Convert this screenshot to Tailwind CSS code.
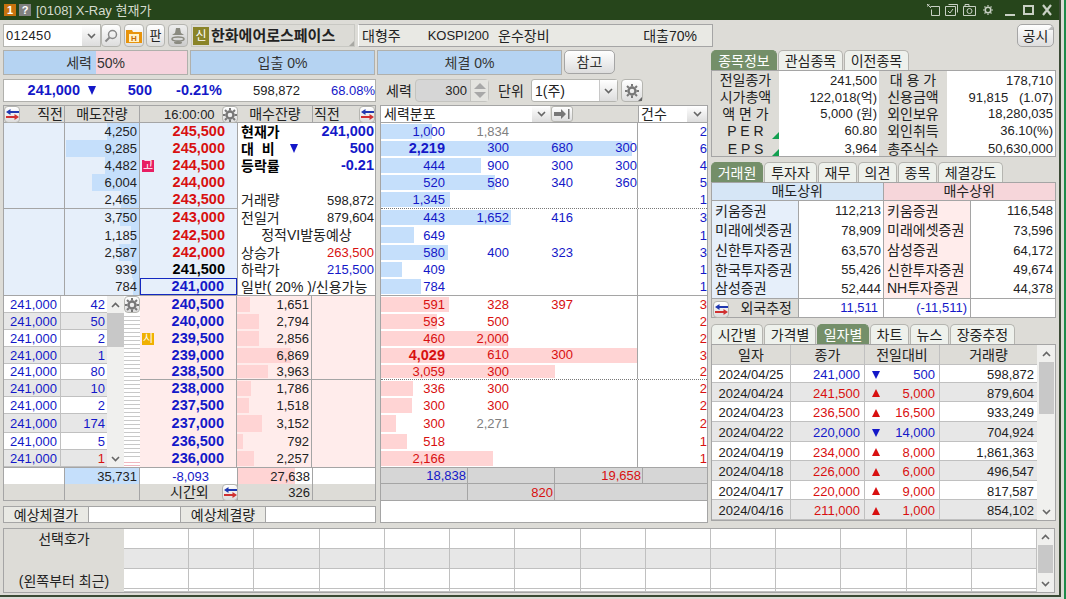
<!DOCTYPE html>
<html lang="ko">
<head>
  <meta charset="UTF-8" />
  <title>[0108] X-Ray 현재가</title>
  <script src="https://cdn.jsdelivr.net/npm/@tailwindcss/browser@4"></script>
</head>
<body class="bg-[#dddcd7]">
<div class="relative w-[1066px] h-[599px] overflow-hidden bg-[#dddcd7] text-[#222] text-[13px] leading-none font-['Liberation_Sans','Noto_Sans_CJK_KR',sans-serif]">
  <div class="w-[1061px] h-[597px] flex flex-col border-r-2 border-b-2 border-[#3a4a34]">

    <!-- title bar -->
    <div class="h-[20px] shrink-0 bg-[#26451b] flex items-center pl-[4px] pr-[7px] text-[#d5dccf]">
      <span class="w-[12px] h-[12px] bg-[#c8730f] text-white text-[11px] font-bold flex items-center justify-center">1</span>
      <span class="w-[12px] h-[12px] ml-[3px] bg-[#808080] text-white text-[11px] font-bold flex items-center justify-center">?</span>
      <span class="ml-[5px] text-[13px]">[0108] X-Ray 현재가</span>
      <div class="ml-auto flex items-center">
        <svg width="13" height="12" viewBox="0 0 13 12" fill="none" stroke="#c8d0c4"><path d="M3.500 2.500h9v9h-8v-6M0 0l4 4M0 3V0h3"/></svg>
        <svg class="ml-[5px]" width="13" height="12" viewBox="0 0 13 12" fill="none" stroke="#c8d0c4"><path d="M3.500 0.500h9v8M0.500 2.500h10v9h-10zM3 7l2 2 3-4"/></svg>
        <svg class="ml-[5px]" width="13" height="12" viewBox="0 0 13 12" fill="none" stroke="#c8d0c4"><path d="M0.500 2.500h12v9h-12zM2 2V0.500h4V2"/><circle cx="6.500" cy="7" r="2.500"/></svg>
        <svg class="ml-[7px]" width="10" height="12" viewBox="0 0 10 12" fill="none" stroke="#c8d0c4" stroke-width="1.600"><circle cx="5" cy="6" r="2.800"/><path stroke-width="1.200" d="M5 1v1.500M5 9.500V11M0 6h1.500M8.500 6H10M1.500 2.500l1 1M7.500 8.500l1 1M8.500 2.500l-1 1M2.500 8.500l-1 1"/></svg>
        <svg class="ml-[12px]" width="10" height="14" viewBox="0 0 10 14" fill="#c8d0c4"><rect x="0" y="11" width="10" height="2"/></svg>
        <svg class="ml-[8px]" width="11" height="14" viewBox="0 0 11 14" fill="none" stroke="#c8d0c4" stroke-width="2"><rect x="1" y="3" width="9" height="8"/></svg>
        <svg class="ml-[8px]" width="10" height="14" viewBox="0 0 10 14" fill="none" stroke="#c8d0c4" stroke-width="2.200"><path d="M1 2l8 10M9 2L1 12"/></svg>
      </div>
    </div>

    <!-- code row -->
    <div class="h-[23px] mt-[4px] ml-[3px] shrink-0 flex">
      <div class="w-[98px] flex border border-[#b5b5b0] bg-white">
        <span class="flex-1 flex items-center pl-[2px] text-[13px] tracking-[0.3px]">012450</span>
        <span class="w-[18px] flex items-center justify-center bg-[linear-gradient(#fff,#ddd)]" data-icon="chev"></span>
      </div>
      <button class="w-[20px] ml-0 border border-[#b5b5b0] rounded-[4px] bg-[linear-gradient(#fff,#ddd)] flex items-center justify-center">
        <svg width="14" height="14" viewBox="0 0 14 14" fill="none" stroke="#888" stroke-width="1.500"><circle cx="8.500" cy="5.500" r="4"/><path stroke-width="2" d="M5.500 8.500L1.500 12.500"/></svg>
      </button>
      <button class="w-[20px] ml-[3px] border border-[#b5b5b0] rounded-[4px] bg-[linear-gradient(#fff,#ddd)] flex items-center justify-center">
        <svg width="16" height="16" viewBox="0 0 16 16"><path fill="#e8940c" d="M0 2h6l1 2h9v11H0z"/><rect x="3" y="6" width="10" height="8" fill="#fff2c8"/><text x="5" y="13" font-size="8" font-weight="700" fill="#c86a00">H</text></svg>
      </button>
      <button class="w-[19px] ml-[2px] border border-[#b5b5b0] rounded-[4px] bg-[linear-gradient(#fff,#ddd)] text-[13px] flex items-center justify-center">판</button>
      <button class="w-[20px] ml-[3px] border border-[#b5b5b0] rounded-[4px] bg-[linear-gradient(#eee,#ccc)] flex items-center justify-center">
        <svg width="16" height="18" viewBox="0 0 16 18"><path fill="#8a8a80" d="M6 1h4l1 5 3 2H2l3-2z"/><ellipse cx="8" cy="12" rx="6" ry="2" fill="none" stroke="#8a8a80" stroke-width="1.500"/><ellipse cx="8" cy="15.500" rx="4" ry="1.500" fill="#8a8a80"/></svg>
      </button>
      <div class="relative w-[164px] ml-[3px] border border-[#c8c8c3] bg-[#dcdbd6] flex items-center pl-[1px]">
        <span class="w-[16px] h-[18px] bg-[#8a8428] text-white text-[12px] flex items-center justify-center">신</span>
        <span class="ml-[2px] text-[15px] font-bold">한화에어로스페이스</span>
        <span class="absolute right-0 bottom-0 border-l-[5px] border-b-[5px] border-l-transparent border-b-[#a8a8a3]"></span>
      </div>
      <div class="w-[355px] ml-[3px] border border-[#a5a5a5] bg-[#e9e9e4] border-l-white flex items-center pl-[3px] text-[14px]">
        <span>대형주</span>
        <span class="ml-[27px] text-[13px]">KOSPI200</span>
        <span class="ml-[9px]">운수장비</span>
        <span class="ml-auto mr-[15px]">대출70%</span>
      </div>
      <button class="relative w-[37px] ml-auto mr-[5px] border border-[#a5a5a5] rounded-[5px] bg-[linear-gradient(#fff,#ddd)] text-[14px]">공시<span class="absolute right-0 top-0 border-l-[5px] border-b-[5px] border-l-transparent border-b-[#bbb]"></span></button>
    </div>

    <div class="flex mt-[3px] ml-[3px]">
      <!-- left block -->
      <div class="w-[705px] shrink-0">
        <div class="h-[25px] flex text-[14px] text-[#333]">
          <div class="w-[185px] flex border border-[#b0b0ac]">
            <span class="w-[92px] bg-[#b5d3f2] flex items-center justify-end pr-[4px]">세력</span>
            <span class="flex-1 bg-[#f6d3dd] flex items-center pl-[1px]">50%</span>
          </div>
          <div class="w-[185px] ml-[2px] border border-[#b0b0ac] bg-[#b5d3f2] flex items-center justify-center">입출 0%</div>
          <div class="w-[185px] ml-[2px] border border-[#b0b0ac] bg-[#b5d3f2] flex items-center justify-center">체결 0%</div>
          <button class="w-[51px] h-[24px] ml-[2px] border border-[#a5a5a5] rounded-[5px] bg-[linear-gradient(#fff,#ddd)]">참고</button>
        </div>

        <div class="h-[23px] mt-[4px] flex">
          <div class="w-[373px] border border-[#b0b0ac] bg-white relative flex items-center">
            <span class="w-[76px] text-right font-bold text-[14.500px] text-[#1418c8]">241,000</span>
            <span class="ml-[8px] border-x-[4px] border-t-[9px] border-x-transparent border-t-[#1418c8]"></span>
            <span class="w-[56px] text-right font-bold text-[14.500px] text-[#1418c8]">500</span>
            <span class="w-[70px] text-right font-bold text-[14.500px] text-[#1418c8]">-0.21%</span>
            <span class="w-[78px] text-right">598,872</span>
            <span class="flex-1 text-right text-[#1418c8]">68.08%</span>
          </div>
          <span class="ml-[10px] w-[28px] self-center text-[14px]">세력</span>
          <div class="ml-[1px] w-[74px] flex border border-[#c4c4c0] rounded-[4px] bg-[#d6d6d6]">
            <span class="flex-1 flex items-center justify-end pr-[3px]">300</span>
            <span class="w-[18px] border-l border-[#c4c4c0] flex flex-col items-center justify-center gap-[3px] bg-[#e4e4e0]">
              <span class="border-x-[6px] border-b-[6px] border-x-transparent border-b-[#a8a8a8]"></span>
              <span class="border-x-[6px] border-t-[6px] border-x-transparent border-t-[#a8a8a8]"></span>
            </span>
          </div>
          <span class="ml-[9px] w-[33px] self-center text-[14px]">단위</span>
          <div class="w-[87px] flex border border-[#b5b5b0] rounded-[3px] bg-white">
            <span class="flex-1 flex items-center pl-[3px] text-[14px]">1(주)</span>
            <span class="w-[18px] flex items-center justify-center border-l border-[#c8c8c8] bg-[linear-gradient(#fff,#ddd)]" data-icon="chev"></span>
          </div>
          <button class="relative w-[22px] ml-[3px] border border-[#b5b5b0] rounded-[4px] bg-[linear-gradient(#fff,#ddd)] flex items-center justify-center">
            <span data-icon="gear"></span>
            <span class="absolute right-0 bottom-0 border-l-[4px] border-b-[4px] border-l-transparent border-b-[#666]"></span>
          </button>
        </div>

        <div class="flex mt-[3px]">
          <div class="w-[373px] shrink-0">
            <!-- order book -->
            <div class="border border-[#a5a5a5] bg-white">
              <div class="h-[17px] grid grid-cols-[61px_75px_98px_75px_1fr] bg-[#dddcd7] border-b border-[#a5a5a5] text-[14px]">
                <div class="relative flex items-center justify-end pr-[1px] border-r border-[#a5a5a5]">직전<span class="absolute left-0 top-0" data-icon="swap"></span></div>
                <div class="flex items-center justify-center border-r border-[#a5a5a5]">매도잔량</div>
                <div class="relative flex items-center pl-[24px] text-[13px]">16:00:00<span class="absolute right-0 top-0" data-icon="gearbtn"></span></div>
                <div class="flex items-center justify-center border-r border-[#a5a5a5]">매수잔량</div>
                <div class="relative flex items-center pl-[1px]">직전<span class="absolute right-0 top-0" data-icon="swap"></span></div>
              </div>
              <div class="flex border-b border-[#a5a5a5]">
                <div id="ask" class="w-[234px] bg-[#e6effa] border-r border-[#a5a5a5]"></div>
                <div id="info" class="flex-1"></div>
              </div>
              <div class="flex">
                <div id="bidleft" class="w-[103px] shrink-0"></div>
                <div class="w-[17px] shrink-0 bg-[#f0f0ee] flex flex-col items-center">
                  <span class="h-[17px] flex items-center" data-icon="up"></span>
                  <span class="w-full h-[34px] bg-[#c8c8c8]"></span>
                  <span class="mt-auto h-[17px] flex items-center" data-icon="chev"></span>
                </div>
                <div class="w-[16px] shrink-0 flex flex-col">
                  <span class="h-[17px]" data-icon="gearbtn"></span>
                  <span class="flex-1 bg-[repeating-linear-gradient(#fff_0,#fff_3px,#c8c8c8_3px,#c8c8c8_4px)]"></span>
                  <span class="h-[7px] bg-[repeating-linear-gradient(#fff_0,#fff_2px,#f0b8c0_2px,#f0b8c0_3px)]"></span>
                </div>
                <div id="bid" class="flex-1 bg-[#ffeceb]"></div>
              </div>
              <div class="h-[17px] grid grid-cols-[61px_75px_98px_75px_1fr] border-t border-[#a5a5a5] bg-white">
                <div class="border-r border-[#a5a5a5]"></div>
                <div class="bg-[#c5dffb] flex items-center justify-end pr-[2px] border-r border-[#a5a5a5]">35,731</div>
                <div class="flex items-center justify-end pr-[28px] text-[#1418c8] border-r border-[#a5a5a5]">-8,093</div>
                <div class="relative flex items-center justify-end pr-[2px] border-r border-[#a5a5a5]"><span class="absolute left-0 inset-y-0 w-[57px] bg-[#ffd4d4]"></span><span class="relative">27,638</span></div>
                <div></div>
              </div>
              <div class="h-[16px] grid grid-cols-[61px_75px_98px_75px_1fr] bg-[#dddcd7]">
                <div class="border-r border-[#a5a5a5]"></div>
                <div class="border-r border-[#a5a5a5]"></div>
                <div class="relative flex items-center pl-[30px] text-[14px] border-r border-[#a5a5a5]">시간외<span class="absolute right-[-1px] top-0" data-icon="swap"></span></div>
                <div class="flex items-center justify-end pr-[2px] border-r border-[#a5a5a5]">326</div>
                <div></div>
              </div>
            </div>
            <div class="h-[17px] mt-[5px] flex border border-[#a5a5a5] bg-white text-[14px]">
              <div class="w-[85px] bg-[#e9e9e4] border-r border-[#a5a5a5] flex items-center justify-center">예상체결가</div>
              <div class="w-[91px]"></div>
              <div class="w-[86px] bg-[#e9e9e4] border-x border-[#a5a5a5] flex items-center justify-center">예상체결량</div>
            </div>
          </div>

          <!-- power distribution -->
          <div class="w-[329px] ml-[4px] h-[418px] border border-[#a5a5a5] bg-white flex flex-col">
            <div class="h-[17px] shrink-0 flex bg-[#dddcd7] border-b border-[#a5a5a5] text-[14px]">
              <span class="w-[151px] bg-white flex items-center pl-[3px]">세력분포</span>
              <span class="w-[18px] flex items-center justify-center bg-[linear-gradient(#fff,#ddd)]" data-icon="chev"></span>
              <button class="w-[22px] ml-[1px] border border-[#b5b5b0] rounded-[3px] bg-[linear-gradient(#fff,#ddd)] flex items-center justify-center">
                <svg width="16" height="10" viewBox="0 0 16 10" fill="#777"><path d="M0 3h7V0l5 5-5 5V7H0z"/><rect x="14" y="0" width="1.500" height="10"/></svg>
              </button>
              <span class="w-[65px]"></span>
              <span class="w-[49px] bg-white border-l border-[#a5a5a5] flex items-center pl-[2px]">건수</span>
              <span class="flex-1 flex items-center justify-center bg-[linear-gradient(#fff,#ddd)]" data-icon="chev"></span>
            </div>
            <div id="power"></div>
            <div class="h-[17px] shrink-0 grid grid-cols-[87px_87px_88px_1fr] bg-[#d6d6d6] border-y border-[#a5a5a5]">
              <div class="flex items-center justify-end pr-[1px] text-[#1418c8] border-r border-[#a5a5a5]">18,838</div>
              <div class="border-r border-[#a5a5a5]"></div>
              <div class="flex items-center justify-end pr-[1px] text-[#d81010] border-r border-[#a5a5a5]">19,658</div>
              <div></div>
            </div>
            <div class="h-[17px] shrink-0 grid grid-cols-[87px_87px_1fr] bg-[#d6d6d6] border-b border-[#a5a5a5]">
              <div class="border-r border-[#a5a5a5]"></div>
              <div class="flex items-center justify-end pr-[1px] text-[#d81010] border-r border-[#a5a5a5]">820</div>
              <div></div>
            </div>
          </div>
        </div>
      </div>

      <!-- right block -->
      <div class="w-[345px] ml-[3px] shrink-0">
        <div id="tabs1" class="h-[20px] flex"></div>
        <div id="stock" class="h-[87px] border border-[#a5a5a5] bg-white"></div>
        <div id="tabs2" class="h-[20px] mt-[5px] flex"></div>
        <div class="h-[136px] border border-[#a5a5a5] bg-white flex flex-col">
          <div class="h-[18px] grid grid-cols-2 text-[14px] border-b border-[#a5a5a5]">
            <span class="bg-[#d6e6f6] border-r border-[#a5a5a5] flex items-center justify-center">매도상위</span>
            <span class="bg-[#f6d6da] flex items-center justify-center">매수상위</span>
          </div>
          <div id="brokers" class="flex-1"></div>
          <div class="h-[20px] grid grid-cols-[87px_85px_87px_1fr] border-t border-[#a5a5a5]">
            <div class="relative bg-[#dddcd7] border-r border-[#a5a5a5] flex items-center justify-end pr-[6px] text-[14px]"><span class="absolute left-[1px] top-[2px]" data-icon="swap"></span>외국추정</div>
            <div class="flex items-center justify-end pr-[5px] border-r border-[#a5a5a5] text-[#1418c8]">11,511</div>
            <div class="flex items-center justify-end pr-[3px] border-r border-[#a5a5a5] text-[#1418c8]">(-11,511)</div>
            <div></div>
          </div>
        </div>
        <div id="tabs3" class="h-[20px] mt-[6px] flex"></div>
        <div class="h-[177px] border border-[#a5a5a5] bg-white flex">
          <div class="w-[325px] flex flex-col">
            <div class="h-[20px] grid grid-cols-[79px_74px_75px_1fr] bg-[#dddcd7] border-b border-[#c0c0c0] text-[14px]">
              <span class="flex items-center justify-center border-r border-[#c0c0c0]">일자</span>
              <span class="flex items-center justify-center border-r border-[#c0c0c0]">종가</span>
              <span class="flex items-center justify-center border-r border-[#c0c0c0]">전일대비</span>
              <span class="flex items-center justify-center">거래량</span>
            </div>
            <div id="daily"></div>
          </div>
          <div class="flex-1 bg-[#f0f0ee] flex flex-col items-center">
            <span class="h-[17px] flex items-center" data-icon="up"></span>
            <span class="w-[15px] h-[52px] bg-[#c8c8c8]"></span>
            <span class="mt-auto h-[17px] flex items-center" data-icon="chev"></span>
          </div>
        </div>
      </div>
    </div>

    <!-- selected quotes -->
    <div class="h-[65px] mt-[5px] mx-[3px] w-[1052px] border border-[#a5a5a5] flex bg-white">
      <div class="w-[120px] bg-[#dddcd7] flex flex-col justify-between items-center pt-[3px] pb-[4px] text-[14px]">
        <span>선택호가</span><span>(왼쪽부터 최근)</span>
      </div>
      <div id="picks" class="w-[913px] grid grid-cols-[repeat(14,1fr)] grid-rows-[20px_20px_20px_3px]"></div>
      <div class="flex-1 bg-[#f0f0ee] flex flex-col items-center">
        <span class="h-[16px] flex items-center" data-icon="up"></span>
        <span class="w-[15px] h-[28px] bg-[#c8c8c8]"></span>
        <span class="mt-auto h-[16px] flex items-center" data-icon="chev"></span>
      </div>
    </div>
  </div>
  <div class="absolute right-0 top-0 bottom-0 w-[2px] bg-[#1e8a4a]"></div>
</div>

<script>
  const BLUE = 'text-[#1418c8]', RED = 'text-[#d81010]';
  const icons = {
    chev: '<svg width="9" height="6" viewBox="0 0 9 6" fill="none" stroke="#666" stroke-width="1.600"><path d="M1 1l3.500 3.500L8 1"/></svg>',
    up: '<svg width="9" height="6" viewBox="0 0 9 6" fill="none" stroke="#666" stroke-width="1.600"><path d="M1 5l3.500-3.500L8 5"/></svg>',
    gear: '<svg width="14" height="14" viewBox="0 0 14 14" fill="none" stroke="#777"><circle cx="7" cy="7" r="3.500" stroke-width="2.400"/><path stroke-width="2" d="M7 0v2.500M7 11.500V14M0 7h2.500M11.500 7H14M2 2l1.800 1.800M10.200 10.200L12 12M12 2l-1.800 1.800M3.800 10.200L2 12"/></svg>',
    swap: '<svg width="13" height="11" viewBox="0 0 13 11"><path fill="#2038b0" d="M0 3L4.500 0v2H13v2H4.500v2z"/><path fill="#d03030" d="M13 8L8.500 5v2H0v2h8.500v2z"/></svg>'
  };
  const btn = 'w-[16px] h-[17px] border border-[#b5b5b0] rounded-[4px] bg-[linear-gradient(#fff,#ddd)] flex items-center justify-center';
  document.querySelectorAll('[data-icon]').forEach(el => {
    const name = el.dataset.icon;
    if (name === 'swap') {
      el.className += ' ' + btn;
      el.innerHTML = icons.swap;
    } else if (name === 'gearbtn') {
      el.className += ' ' + btn;
      el.innerHTML = icons.gear;
    } else {
      el.innerHTML = icons[name];
    }
  });

  const askH = [17, 17, 17, 17, 18, 17, 18, 17, 17, 17];
  const bidH = [17, 17, 17, 17, 16, 17, 17, 19, 17, 17];

  // ask side
  const asks = [
    ['4,250', 32, '245,500', RED], ['9,285', 73, '245,000', RED], ['4,482', 34, '244,500', RED, 'hi'],
    ['6,004', 47, '244,000', RED], ['2,465', 18, '243,500', RED], ['3,750', 19, '243,000', RED],
    ['1,185', 8, '242,500', RED], ['2,587', 20, '242,000', RED], ['939', 7, '241,500', 'text-black'], ['784', 6, '241,000', BLUE, 'cur']
  ];
  document.getElementById('ask').innerHTML = asks.map((a, i) => `
    <div class="grid grid-cols-[61px_75px_1fr] ${i === 4 ? 'border-b border-[#a5a5a5]' : ''}" style="height:${askH[i]}px">
      <div class="border-r border-[#a5a5a5]"></div>
      <div class="relative flex items-center justify-end pr-[2px] border-r border-[#a5a5a5]">
        <span class="absolute right-0 inset-y-0 bg-[#c5dffb]" style="width:${a[1]}px"></span><span class="relative">${a[0]}</span>
      </div>
      <div class="flex items-center pl-[2px] pr-[12px] ${a[4] === 'cur' ? 'border border-[#1428c0]' : ''}">
        ${a[4] === 'hi' ? '<span class="w-[12px] h-[12px] bg-[#e81e62] text-white text-[11px] flex items-center justify-center">고</span>' : ''}
        <span class="ml-auto font-bold text-[14.500px] ${a[3]}">${a[2]}</span>
      </div>
    </div>`).join('');

  const info = [
    ['현재가', '241,000', 'font-bold text-black', 'font-bold text-[14.500px] ' + BLUE],
    ['대&nbsp;&nbsp;비', '500', 'font-bold text-black', 'font-bold text-[14.500px] ' + BLUE, true],
    ['등락률', '-0.21', 'font-bold text-black', 'font-bold text-[14.500px] ' + BLUE],
    ['', ''],
    ['거래량', '598,872'], ['전일거', '879,604'], null,
    ['상승가', '263,500', '', RED], ['하락가', '215,500', '', BLUE], 'last'
  ];
  document.getElementById('info').innerHTML = info.map((r, i) => {
    const h = askH[i];
    if (r === null) return `<div class="flex items-center justify-center text-[14px]" style="height:${h}px">정적VI발동예상</div>`;
    if (r === 'last') return `<div class="flex items-center pl-[3px] text-[14px]" style="height:${h}px">일반( 20% )/신용가능</div>`;
    return `<div class="flex items-center pl-[3px] pr-[1px]" style="height:${h}px">
      <span class="text-[14px] ${r[2] || ''}">${r[0]}</span>
      ${r[4] ? '<span class="ml-[15px] border-x-[4px] border-t-[9px] border-x-transparent border-t-[#1418c8]"></span>' : ''}
      <span class="ml-auto ${r[3] || ''}">${r[1]}</span>
    </div>`;
  }).join('');

  // bid side
  const bidPrev = ['42', '50', '2', '1', '80', '10', '2', '174', '5', '1'];
  document.getElementById('bidleft').innerHTML = bidPrev.map((n, i) => `
    <div class="grid grid-cols-[57px_1fr] border-b border-[#c0c0c0] ${i % 2 ? 'bg-[#e7e7e7]' : 'bg-white'}" style="height:${bidH[i]}px">
      <span class="flex items-center justify-end pr-[3px] border-r border-[#c0c0c0] ${BLUE}">241,000</span>
      <span class="flex items-center justify-end pr-[2px] ${i === 9 ? RED : BLUE}">${n}</span>
    </div>`).join('');

  const bids = [
    ['240,500', '1,651', 13], ['240,000', '2,794', 22], ['239,500', '2,856', 22, 'si'], ['239,000', '6,869', 54], ['238,500', '3,963', 31],
    ['238,000', '1,786', 14], ['237,500', '1,518', 12], ['237,000', '3,152', 25], ['236,500', '792', 6], ['236,000', '2,257', 17]
  ];
  document.getElementById('bid').innerHTML = bids.map((b, i) => `
    <div class="grid grid-cols-[97px_75px_1fr] ${i === 4 ? 'border-b border-[#a5a5a5]' : ''}" style="height:${bidH[i]}px">
      <div class="flex items-center pl-[2px] pr-[12px] border-r border-[#a5a5a5]">
        ${b[3] ? '<span class="w-[12px] h-[12px] bg-[#f0b000] text-white text-[11px] flex items-center justify-center">시</span>' : ''}
        <span class="ml-auto font-bold text-[14.500px] ${BLUE}">${b[0]}</span>
      </div>
      <div class="relative flex items-center justify-end pr-[2px] border-r border-[#a5a5a5]">
        <span class="absolute left-0 inset-y-[1px] bg-[#ffd4d4]" style="width:${b[2]}px"></span><span class="relative">${b[1]}</span>
      </div>
      <div></div>
    </div>`).join('');

  // power distribution: bar, four order sizes, count
  const power = [
    [51, ['1,000', '1,834', '', ''], '2'], [251, ['2,219', '300', '680', '300'], '6', 1], [100, ['444', '900', '300', '300'], '4'],
    [114, ['520', '580', '340', '360'], '5'], [69, ['1,345', '', '', ''], '1'], [130, ['443', '1,652', '416', ''], '3'],
    [33, ['649', '', '', ''], '1'], [67, ['580', '400', '323', ''], '3'], [21, ['409', '', '', ''], '1'], [40, ['784', '', '', ''], '1'],
    [68, ['591', '328', '397', ''], '3'], [56, ['593', '500', '', ''], '2'], [127, ['460', '2,000', '', ''], '2'],
    [256, ['4,029', '610', '300', ''], '3', 1], [174, ['3,059', '300', '', ''], '2'], [32, ['336', '300', '', ''], '2'],
    [31, ['300', '300', '', ''], '2'], [15, ['300', '2,271', '', ''], '2'], [26, ['518', '', '', ''], '1'], [112, ['2,166', '', '', ''], '1']
  ];
  const powerH = askH.concat(bidH);
  document.getElementById('power').innerHTML = power.map((p, i) => {
    const isAsk = i < 10;
    const color = isAsk ? BLUE : RED;
    const line = i === 4 || i === 14 ? 'border-b border-dotted border-[#777]' : i === 9 ? 'border-b border-[#a5a5a5]' : '';
    const cells = p[1].map((v, c) => {
      const grey = v === '1,834' || v === '2,271';
      const strong = p[3] && c === 0 ? 'font-bold text-[14.500px]' : '';
      return `<span class="relative w-[64px] shrink-0 text-right ${grey ? 'text-[#808080]' : color} ${strong}">${v}</span>`;
    }).join('');
    return `<div class="relative flex ${line}" style="height:${powerH[i] + (i === 9 ? 1 : 0)}px">
      <div class="relative w-[257px] shrink-0 flex items-center border-r border-[#a5a5a5] overflow-hidden">
        <span class="absolute left-0 inset-y-[1px] ${isAsk ? 'bg-[#c5dffb]' : 'bg-[#ffd4d4]'}" style="width:${p[0]}px"></span>
        <div class="relative flex w-[252px]">${cells}</div>
      </div>
      <span class="flex-1 flex items-center justify-end overflow-hidden ${color}">${p[2]}</span>
    </div>`;
  }).join('');

  // tabs
  function tabs(id, items) {
    document.getElementById(id).innerHTML = items.map(([label, w, on]) => `
      <span class="mr-[1px] flex items-center justify-center rounded-t-[5px] border border-b-0 text-[14px] ${on ? 'bg-[#748f69] text-white border-[#748f69]' : 'bg-[#eef1ec] border-[#b5b5b0]'}" style="width:${w}px">${label}</span>`).join('');
  }
  tabs('tabs1', [['종목정보', 66, 1], ['관심종목', 65], ['이전종목', 65]]);
  tabs('tabs2', [['거래원', 52, 1], ['투자자', 53], ['재무', 39], ['의견', 39], ['종목', 39], ['체결강도', 65]]);
  tabs('tabs3', [['시간별', 52], ['가격별', 52], ['일자별', 52, 1], ['차트', 39], ['뉴스', 39], ['장중추정', 65]]);

  // stock info
  const stock = [
    ['전일종가', '241,500', '대 용 가', '178,710'], ['시가총액', '122,018(억)', '신용금액', '91,815 &nbsp;&nbsp;(1.07)'],
    ['액 면 가', '5,000 (원)', '외인보유', '18,280,035'], ['P E R', '60.80', '외인취득', '36.10(%)'], ['E P S', '3,964', '총주식수', '50,630,000']
  ];
  const stockH = [18, 16, 17, 17, 17];
  document.getElementById('stock').innerHTML = stock.map((r, i) => {
    const low = i === 4 ? 'pt-[2px]' : '';
    return `<div class="grid grid-cols-[67px_100px_68px_1fr]" style="height:${stockH[i]}px">
      <span class="relative bg-[#dddcd7] flex items-center justify-center text-[14px] ${low}">${r[0]}${i > 2 ? '<span class="absolute right-0 bottom-0 border-l-[7px] border-b-[7px] border-l-transparent border-b-[#12a050]"></span>' : ''}</span>
      <span class="flex items-center justify-end pr-[2px] ${low}">${r[1]}</span>
      <span class="bg-[#dddcd7] flex items-center justify-center text-[14px] ${low}">${r[2]}</span>
      <span class="flex items-center justify-end pr-[2px] ${low}">${r[3]}</span>
    </div>`;
  }).join('');

  // brokers
  const brokers = [
    ['키움증권', '112,213', '키움증권', '116,548', 20], ['미래에셋증권', '78,909', '미래에셋증권', '73,596', 19],
    ['신한투자증권', '63,570', '삼성증권', '64,172', 21], ['한국투자증권', '55,426', '신한투자증권', '49,674', 18], ['삼성증권', '52,444', 'NH투자증권', '44,378', 19]
  ];
  document.getElementById('brokers').innerHTML = brokers.map(r => `
    <div class="grid grid-cols-[87px_85px_87px_1fr] text-[14px]" style="height:${r[4]}px">
      <span class="bg-[#e6effa] flex items-center pl-[3px] border-r border-[#a5a5a5] whitespace-nowrap">${r[0]}</span>
      <span class="flex items-center justify-end pr-[2px] border-r border-[#a5a5a5] text-[13px]">${r[1]}</span>
      <span class="bg-[#ffeceb] flex items-center pl-[3px] border-r border-[#a5a5a5] whitespace-nowrap">${r[2]}</span>
      <span class="flex items-center justify-end pr-[2px] text-[13px]">${r[3]}</span>
    </div>`).join('');

  // daily prices
  const daily = [
    ['2024/04/25', '241,000', 0, '500', '598,872', 18], ['2024/04/24', '241,500', 1, '5,000', '879,604', 19],
    ['2024/04/23', '236,500', 1, '16,500', '933,249', 20], ['2024/04/22', '220,000', 0, '14,000', '704,924', 20],
    ['2024/04/19', '234,000', 1, '8,000', '1,861,363', 19], ['2024/04/18', '226,000', 1, '6,000', '496,547', 20],
    ['2024/04/17', '220,000', 1, '9,000', '817,587', 19], ['2024/04/16', '211,000', 1, '1,000', '854,102', 20]
  ];
  document.getElementById('daily').innerHTML = daily.map((d, i) => {
    const c = d[2] ? RED : BLUE;
    const arrow = d[2]
      ? '<span class="border-x-[4px] border-b-[8px] border-x-transparent border-b-current"></span>'
      : '<span class="border-x-[4px] border-t-[8px] border-x-transparent border-t-current"></span>';
    return `<div class="grid grid-cols-[79px_74px_75px_1fr] border-b border-[#c0c0c0] ${i % 2 ? 'bg-[#e7e7e7]' : 'bg-white'}" style="height:${d[5]}px">
      <span class="flex items-center justify-center pt-[2px] border-r border-[#c0c0c0]">${d[0]}</span>
      <span class="flex items-center justify-end pt-[2px] pr-[4px] border-r border-[#c0c0c0] ${c}">${d[1]}</span>
      <span class="flex items-center justify-between pt-[2px] pl-[7px] pr-[4px] border-r border-[#c0c0c0] ${c}">${arrow}${d[3]}</span>
      <span class="flex items-center justify-end pt-[2px] pr-[3px]">${d[4]}</span>
    </div>`;
  }).join('');

  // selected quotes grid
  let picks = '';
  for (let row = 0; row < 4; row++) {
    for (let col = 0; col < 14; col++) {
      picks += `<span class="${row === 1 ? 'bg-[#e7e7e7]' : 'bg-white'} border-r border-b border-[#c0c0c0]"></span>`;
    }
  }
  document.getElementById('picks').innerHTML = picks;
</script>
</body>
</html>
